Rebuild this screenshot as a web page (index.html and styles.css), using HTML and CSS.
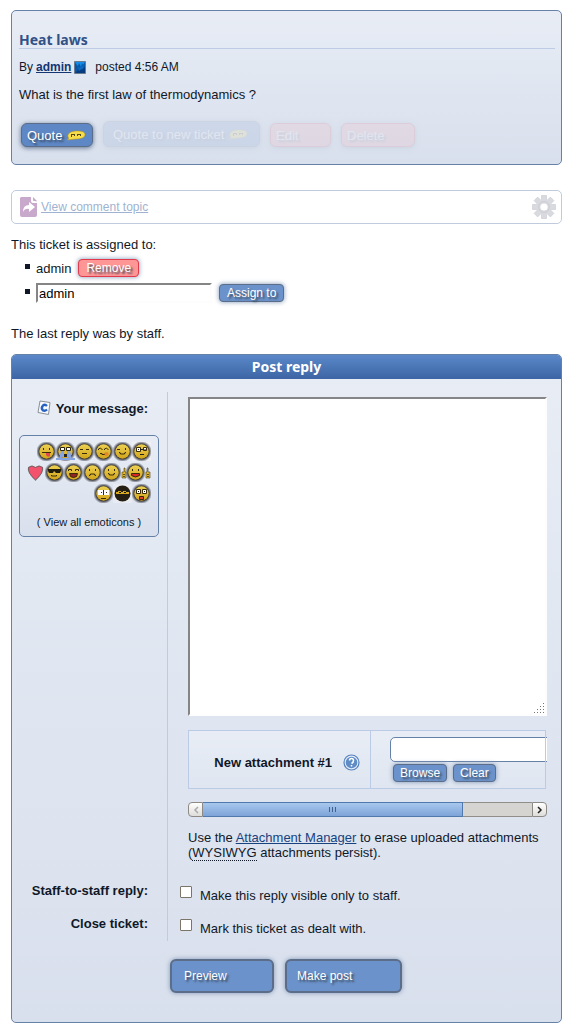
FILE: index.html
```html
<!DOCTYPE html>
<html lang="en">
<head>
<meta charset="utf-8">
<title>Heat laws</title>
<link rel="stylesheet" href="styles.css">
</head>
<body>
<svg class="defs" width="0" height="0" aria-hidden="true">
  <defs>
    <radialGradient id="halo"><stop offset=".7" stop-color="#222" stop-opacity=".9"/><stop offset="1" stop-color="#334" stop-opacity="0"/></radialGradient>
    <linearGradient id="gold" x2="0" y2="1"><stop stop-color="#ecd052"/><stop offset="1" stop-color="#d2a51c"/></linearGradient>
    <g id="face"><circle cx="9.5" cy="9.5" r="10.5" fill="url(#halo)"/><circle cx="9.500" cy="9.500" r="7.2" fill="url(#gold)"/></g>
    <g id="bubble"><path d="M1 12c2-1 2-2 1-3C1 5 6 3 11 3c5 0 8 1 8 3.500 0 3-4 4.500-9 4.500-3 0-6 1-9 1z" fill="#f6dc46" stroke="#b8921d" stroke-width=".5"/><path d="M5.500 6v3M8.500 6v2M11.500 6v2M14.500 6v2M6 6.500h2M12 6.500h2" stroke="#55481a" fill="none"/></g>
  </defs>
</svg>

<article class="card post">
  <h3 class="post-title">Heat laws</h3>
  <p class="byline">By <a class="author" href="#">admin</a>
    <svg class="avatar" width="12" height="13" viewBox="0 0 12 13"><path fill="#0757a5" stroke="#687b91" d="M.5.5h11v12H.5z"/><path fill="#168cea" d="M1 1h10L9 4 8 2 7 6 5 2 4 5 2 3z"/><path fill="#073b80" d="m1 12 5-5 2 2 3-3v6z"/><path fill="#0d68c4" d="M3 4l2 3 3-2 2-2-1 4-4 3z"/></svg>
    <span class="date">posted 4:56 AM</span></p>
  <p class="question">What is the first law of thermodynamics ?</p>
  <div class="actions">
    <button class="btn action action-quote">Quote <svg width="20" height="14"><use href="#bubble"/></svg></button>
    <button class="btn action action-ticket faded">Quote to new ticket <svg width="20" height="14"><use href="#bubble"/></svg></button>
    <button class="btn action action-edit danger faded">Edit</button>
    <button class="btn action action-delete danger faded">Delete</button>
  </div>
</article>

<nav class="topic-bar">
  <a class="topic-link" href="#"><svg width="17" height="20" viewBox="0 0 17 20"><path fill="#c9a9cb" d="M1 0h10l6 5v13q0 2-2 2H2q-2 0-2-2V1z"/><path fill="#fff" d="M11 0h2v3l4 2v1h-4q-2 0-2-2z"/><path fill="#c9a9cb" d="M13 0l4 4h-3q-1 0-1-1z"/><path fill="#fff" d="M9 5l6 5-6 5v-3q-4-1-6 3 0-7 6-7z"/></svg><span>View comment topic</span></a>
  <button class="gear" aria-label="Tools"><svg width="24" height="24" viewBox="-12 -12 24 24"><g fill="#d9dae0" stroke="#cdced5" stroke-width=".7"><path id="tooth" d="M-2.5-6v-5.500h5V-6zM-2.500 6v5.500h5V6z"/><use href="#tooth" transform="rotate(45)"/><use href="#tooth" transform="rotate(90)"/><use href="#tooth" transform="rotate(135)"/></g><circle r="8" fill="#d9dae0"/><circle r="5.400" fill="none" stroke="#cccdd4"/><circle r="3.600" fill="#fff"/></svg></button>
</nav>

<section class="assignment">
  <p>This ticket is assigned to:</p>
  <ul class="assignees">
    <li><span>admin</span><button class="btn small danger">Remove</button></li>
    <li><input class="assign-input" aria-label="Assign to" value="admin"><button class="btn small">Assign to</button></li>
  </ul>
  <p>The last reply was by staff.</p>
</section>

<form class="card reply" onsubmit="return false">
  <h3 class="reply-title">Post reply</h3>
  <div class="fields">
    <div class="label-cell message-label">
      <label for="message"><svg width="14" height="16" viewBox="0 0 14 16"><path d="m3 1 10 1.500L11.500 14.500 1 12.500z" fill="#f7f9fd" stroke="#8a8e96"/><path d="M10 6Q8 4 6 5.500 3.500 8 6 10.500q2 1 4-1" fill="none" stroke="#2561c0" stroke-width="2.400"/></svg>Your message:</label>
      <div class="emoticons">
        <div class="faces">
          <svg width="19" height="19"><use href="#face"/><path d="M6.500 6v2M12.500 6v2M5 10.500h9" stroke="#3a2b05" fill="none"/><path d="M9 11h4v3q-2 2-4-1z" fill="#df4850"/></svg>
          <svg width="19" height="19"><use href="#face"/><path d="M4.500 5.500h4v3h-4zM10.500 5.500h4v3h-4z" fill="#fff" stroke="#2b2510"/><path d="M5 9h3v4l-3 4H3zM11 9h3l2 8h-3l-2-4zM0 16h19v2H0z" fill="#86a3e2"/><path d="M8 12h3v3H8z" fill="#222"/></svg>
          <svg width="19" height="19"><use href="#face"/><path d="M5 7.500h3M11 7.500h3M7 11.500h5" stroke="#3a2b05" fill="none"/></svg>
          <svg width="19" height="19"><use href="#face"/><path d="M4.500 8V7l2-1 2 2M10.500 8V7l2-1 2 2M6 11.500h2v1h3v-1" stroke="#3a2b05" fill="none"/><circle cx="12.500" cy="12" r="2" fill="#e98527"/></svg>
          <svg width="19" height="19"><use href="#face"/><path d="M4 7.500h3M12.500 6v2M6.500 10v1h1v1h4v-1h1v-1" stroke="#3a2b05" fill="none"/></svg>
          <svg width="19" height="19"><path fill="#eef0f5" d="M0 0h19v19H0z"/><use href="#face"/><path d="M4.500 5.500h4v4h-4zM11.500 5.500h3v3h-3z" fill="#fff" stroke="#3a2b05"/><path d="M6.500 7v1M13 7v1M8 7.500h3M8 12.500h4" stroke="#222"/></svg>
        </div>
        <div class="faces">
          <svg width="19" height="19"><path d="M9.500 18Q0 9 2 4q4-3 7.500 0Q13 1 17 4q2 5-7.500 14z" fill="#333" opacity=".35"/><path d="M9.500 17Q1.500 10 2.500 4.500q3.500-3 7 0 3.500-3 7 0 1 5.500-7 12.500z" fill="#f2526c" stroke="#555" stroke-opacity=".7"/></svg>
          <svg width="19" height="19"><use href="#face"/><path d="M3 6h13v2l-1 2h-4L9 8l-1 2H4L3 8z" fill="#211d0d"/><path d="M6.500 12v1h5v-1" stroke="#3a2b05" fill="none"/></svg>
          <svg width="19" height="19"><use href="#face"/><path d="M4.500 8V6.500h3V8M11.500 8V6.500h3V8" stroke="#3a2b05" fill="none"/><path d="M5.500 10.500h8q0 4-4 4t-4-4z" fill="#942327" stroke="#3a2b05"/></svg>
          <svg width="19" height="19"><use href="#face"/><path d="M6.500 6v2M12.500 6v2M6.500 13v-1h1v-1h4v1h1v1" stroke="#3a2b05" fill="none"/></svg>
          <svg width="19" height="19"><use href="#face"/><path d="M6.500 6v2M12.500 6v2M6.500 10v1h1v1h4v-1h1v-1" stroke="#3a2b05" fill="none"/></svg>
          <svg class="thumbs" width="30" height="19"><use href="#face" x="5"/><path d="M11.500 6v2M17.500 6v2" stroke="#3a2b05"/><path d="M10.500 10.500h8v2q-4 3-8 0z" fill="#d7282b" stroke="#3a2b05"/><path d="M3 5v4H1v6h4V9H4V5zM26 5v4h-1v6h4V9h-2V5z" fill="#e1b72b" stroke="#4d431d" stroke-opacity=".6"/><path d="M2 11.500h2m-2 2h2m22-2h2m-2 2h2" stroke="#665319"/></svg>
        </div>
        <div class="faces">
          <svg width="19" height="19"><use href="#face"/><path d="M4 6h5v5H4zM10 6h5v5h-5z" fill="#fff"/><path d="M7 8.500h1M12 8.500h1M7 14.500h5M9.500 6v5" stroke="#3a2b05"/></svg>
          <svg width="19" height="19"><path fill="#e9ebf2" d="M0 0h19v19H0z"/><circle cx="9.500" cy="9.500" r="8" fill="#241f12"/><path d="M3 8h2V7h3v1h2V7h3v1h3v2H3z" fill="#d7aa20"/><path d="M6 8.500h2M11 8.500h2" stroke="#111"/></svg>
          <svg width="19" height="19"><use href="#face"/><path d="M4.500 5.500h4v4h-4zM10.500 5.500h4v4h-4z" fill="#fff" stroke="#3a2b05"/><path d="M6.500 7v1M12.500 7v1" stroke="#111"/><path d="M7.500 12.500h4v3h-4z" fill="#d9432c" stroke="#3a2b05"/></svg>
        </div>
        <p class="all-emoticons">( <a href="#">View all emoticons</a> )</p>
      </div>
    </div>
    <div class="value-cell message-cell">
      <div class="message-box"><textarea id="message"></textarea><svg class="grip" width="11" height="11" viewBox="0 0 11 11"><path fill="#777" d="M9 0h1v1H9zM9 3h1v1H9zM9 6h1v1H9zM9 9h1v1H9zM6 3h1v1H6zM6 6h1v1H6zM6 9h1v1H6zM3 6h1v1H3zM3 9h1v1H3zM0 9h1v1H0z"/></svg></div>
      <div class="attachment-scroll">
        <table class="attachments"><tr>
          <th scope="row"><label for="attachment">New attachment #1</label><svg width="17" height="17" viewBox="0 0 17 17"><circle cx="8.500" cy="8.500" r="7.500" fill="#e3ebf7" stroke="#5583bd" stroke-width="1.200"/><circle cx="8.500" cy="8.500" r="5.800" fill="#5f8cc5"/><path d="M6.500 6.500q0-2 2-2t2 2-2 3M8.500 11v1.500" fill="none" stroke="#fff" stroke-width="1.500"/></svg></th>
          <td><input id="attachment" class="attachment-input"><div class="attachment-buttons"><button class="btn small">Browse</button><button class="btn small">Clear</button></div></td>
        </tr></table>
      </div>
      <div class="scrollbar">
        <button class="scroll-btn" aria-label="Scroll left" disabled><svg width="6" height="8"><path d="M5 1 2 4l3 3" fill="none" stroke="#aaa" stroke-width="1.500"/></svg></button>
        <div class="track"><div class="thumb"><i></i><i></i><i></i></div></div>
        <button class="scroll-btn" aria-label="Scroll right"><svg width="6" height="8"><path d="m1 1 3 3-3 3" fill="none" stroke="#222" stroke-width="1.500"/></svg></button>
      </div>
      <p class="note">Use the <a href="#">Attachment Manager</a> to erase uploaded attachments (<abbr>WYSIWYG</abbr> attachments persist).</p>
    </div>
    <div class="label-cell">Staff-to-staff reply:</div>
    <div class="value-cell check-cell"><input type="checkbox" id="staff"><label for="staff">Make this reply visible only to staff.</label></div>
    <div class="label-cell">Close ticket:</div>
    <div class="value-cell check-cell"><input type="checkbox" id="close"><label for="close">Mark this ticket as dealt with.</label></div>
  </div>
  <div class="submit-row"><button class="btn large preview">Preview</button><button class="btn large make">Make post</button></div>
</form>
</body>
</html>
```
FILE: styles.css
```css
* { box-sizing: border-box; }
body {
  margin: 10px 11px 6px;
  color: #101828;
  background: #fff;
  font: 13px/15px "Liberation Sans", Arial, sans-serif;
}
p, h3, ul { margin: 0; padding: 0; }
svg { flex: none; }
button, input, textarea { font: inherit; }
.defs { position: absolute; }
.card {
  border: 1px solid #6681a8;
  border-radius: 5px;
  background: linear-gradient(#e8edf5, #e2e8f2 35%, #d9e0ed);
}
.post { padding: 20px 6px 17px 7px; }
.post-title {
  color: #315187;
  font: bold 14px/17px "Noto Sans", sans-serif;
  border-bottom: 1px solid #bdcce6;
}
.byline { display: flex; align-items: center; gap: 3px; margin-top: 11px; font-size: 12px; }
.author { color: #133572; font-weight: bold; }
.date { margin-left: 6px; }
.question { margin-top: 12px; }
.actions { display: flex; align-items: flex-end; gap: 10px; margin: 19px 2px 0; }

.btn {
  display: flex;
  align-items: center;
  padding: 0 6px;
  color: #fff;
  background: #6b92ca;
  border: 1px solid #5b6d89;
  border-radius: 4px;
  box-shadow: 0 0 5px #8196b5;
  text-shadow: 2px 2px 2px #394657;
  white-space: nowrap;
}
.action { height: 24px; padding: 0 5px; gap: 4px; background: #5d87c5; border-radius: 6px; box-shadow: 0 1px 5px #5c6f8c; }
.action-quote { width: 72px; }
.action-ticket { width: 157px; height: 26px; padding: 0 9px; }
.action-edit { width: 61px; }
.action-delete { width: 74px; }
.small { height: 18px; font-size: 12px; }
.large { height: 34px; padding: 0 10px 0 12px; border-width: 2px; border-radius: 6px; font-size: 12px; }
.danger { background: #ff9696; border-color: #e03a4c; }
.faded { opacity: .12; }

.topic-bar {
  display: flex;
  align-items: center;
  justify-content: space-between;
  height: 34px;
  margin-top: 25px;
  padding: 0 5px 0 8px;
  border: 1px solid #c0ccde;
  border-radius: 5px;
}
.topic-link { display: flex; align-items: center; gap: 4px; color: #9fb3d0; font-size: 12px; }
.gear { display: flex; padding: 0; border: 0; background: none; }

.assignment { padding: 13px 0; }
.assignees { list-style: none; padding: 7px 0 23px 14px; }
.assignees li { display: flex; align-items: center; height: 18px; }
.assignees li + li { height: 20px; margin-top: 6px; }
.assignees li::before { content: ""; width: 5px; height: 5px; margin: 0 6px 4px 0; background: #101828; }
.assignees .btn { margin-left: 7px; padding: 0 7px; }
.assign-input { width: 176px; height: 20px; padding: 0 1px; border: 2px solid; border-color: #858585 #fdfdfd #fdfdfd #858585; }

.reply-title {
  padding: 3px 0;
  color: #fff;
  background: linear-gradient(#5a88c9, #3d65a5);
  border-radius: 4px 4px 0 0;
  font: bold 14px/18px "Noto Sans", sans-serif;
  text-align: center;
}
.fields { display: grid; grid-template-columns: 156px minmax(0, 1fr); grid-template-rows: auto 33px 33px; padding-top: 13px; }
.label-cell { padding: 8px 19px 0 7px; border-right: 1px solid #bdcbe3; font-weight: bold; text-align: right; }
.message-label { padding-right: 8px; }
.message-label > label { display: flex; align-items: center; justify-content: flex-end; gap: 5px; margin-right: 11px; }
.emoticons {
  margin-top: 19px;
  padding: 5px 7px 6px;
  border: 1px solid #6681a8;
  border-radius: 5px;
  background: linear-gradient(#e8edf5, #d9e0ed);
  font-weight: normal;
}
.faces { display: flex; justify-content: flex-end; height: 21px; padding-top: 1px; }
.all-emoticons { margin-top: 11px; font-size: 11px; text-align: center; }
.all-emoticons a { color: inherit; text-decoration: none; }
.value-cell { padding-right: 14px; }
.message-cell { padding: 5px 14px 15px 20px; }
.message-box { position: relative; }
.grip { position: absolute; right: 2px; bottom: 2px; }
textarea {
  display: block;
  width: 100%;
  height: 319px;
  border: 2px solid;
  border-color: #858585 #fdfdfd #fdfdfd #858585;
  background: #fff;
  resize: none;
}
.attachment-scroll { margin-top: 14px; overflow: hidden; }
.attachments {
  width: calc(100% - 1px);
  height: 59px;
  table-layout: fixed;
  border-collapse: collapse;
  background: linear-gradient(#e8edf5, #dfe6f1);
}
.attachments th, .attachments td { padding: 0; border: 1px solid #bccbe5; }
.attachments th { width: 51%; }
.attachments th label { vertical-align: middle; margin-right: 11px; }
.attachments th svg { vertical-align: middle; }
.attachments th { text-align: right; padding: 5px 10px 0 0; }
.attachments td { padding-left: 19px; }
.attachment-input { display: block; width: 220px; height: 25px; border: 1px solid #6681a8; border-radius: 5px; }
.attachment-buttons { display: flex; gap: 6px; margin: 2px 0 0 3px; }
.scrollbar { display: flex; height: 15px; margin-top: 13px; }
.scroll-btn { display: flex; align-items: center; justify-content: center; width: 15px; padding: 0; border: 1px solid #8d8984; border-radius: 4px 0 0 4px; background: linear-gradient(#fff, #deddda); }
.scroll-btn:last-child { border-radius: 0 4px 4px 0; }
.track { flex: 1; background: #d6d4d1; border: solid #918e8a; border-width: 1px 0; }
.thumb { display: flex; align-items: center; justify-content: center; gap: 2px; width: 79%; height: 15px; margin: -1px 0; border: 1px solid #5079ad; border-left: 0; background: linear-gradient(#a8c8ee, #7da4d8); }
.thumb i { width: 1px; height: 5px; background: #3f618e; }
.note { margin-top: 13px; }
.note a { color: #17427f; }
abbr { border-bottom: 1px dotted #101828; }
.check-cell { display: flex; align-items: flex-start; gap: 8px; padding: 11px 14px 0 12px; }
.check-cell input { appearance: none; width: 12px; height: 12px; margin: 0; border: 1px solid #7b7469; border-radius: 1px; background: #fff; }
.check-cell label { margin-top: 2px; }
.submit-row { display: flex; gap: 11px; padding: 18px 0 29px 158px; }
.preview { width: 104px; }
.make { width: 117px; padding-left: 10px; }
```
